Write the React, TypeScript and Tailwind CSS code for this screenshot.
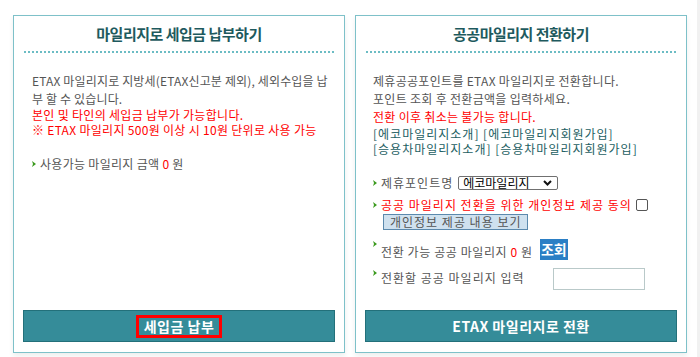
import React from "react";

const font = { fontFamily: '"Noto Sans CJK KR", "Noto Sans", sans-serif' };

function Bullet({ className = "" }: { className?: string }) {
  return (
    <svg width="4" height="6" viewBox="0 0 4 6" className={`shrink-0 ${className}`}>
      <polygon points="0,0 4,3 0,6 1,3" fill="#3b9a1e" />
    </svg>
  );
}

function Panel({ title, children, button, boxed }: { title: string; children: React.ReactNode; button: string; boxed?: boolean }) {
  return (
    <div className="w-[332px] h-[338px] border border-[#7ec1c9] bg-white flex flex-col px-[9px] pb-[10px] shadow-[0_3px_5px_rgba(0,0,0,0.07)]">
      <div className="h-[37px] mx-[1px] border-b-2 border-dotted border-[#6cbcc4] flex items-center justify-center pt-[1px]">
        <span className="text-[15px] font-semibold text-[#1e5a5e] tracking-[-0.5px]">{title}</span>
      </div>
      {children}
      <div className="mt-auto h-[32px] bg-[#358c99] border border-[#23707a] flex items-center justify-center">
        <span
          className={`text-[14px] font-bold text-white leading-[17px] tracking-[0.5px] ${boxed ? "border-[3px] border-[#ff0000] px-[5px] py-[0px]" : ""}`}
        >
          {button}
        </span>
      </div>
    </div>
  );
}

export default function App() {
  return (
    <div className="w-[700px] h-[357px] bg-white flex overflow-hidden" style={font}>
      <div className="flex-1 flex gap-[10px] pl-[13px] pt-[15px]">
        <Panel title="마일리지로 세입금 납부하기" button="세입금 납부" boxed>
          <div className="pl-[9px] pt-[19px] text-[12px] text-[#555] tracking-[0.15px]">
            <p className="leading-[18px]">ETAX 마일리지로 지방세(ETAX신고분 제외), 세외수입을 납부 할 수 있습니다.</p>
            <div className="tracking-[0.3px] text-[#ff0000]">
              <p className="leading-[15px] mt-[-1px]">본인 및 타인의 세입금 납부가 가능합니다.</p>
              <p className="leading-[15px]">※ ETAX 마일리지 500원 이상 시 10원 단위로 사용 가능</p>
            </div>
            <div className="flex items-center gap-[4px] mt-[19px] leading-[15px] tracking-[0.3px]">
              <Bullet />
              <span>
                사용가능 마일리지 금액 <span className="text-[#ff0000]">0</span> 원
              </span>
            </div>
          </div>
        </Panel>
        <Panel title="공공마일리지 전환하기" button="ETAX 마일리지로 전환">
          <div className="pl-[8px] pt-[19px] text-[12px] text-[#555]">
            <div className="tracking-[0.3px]">
              <p className="leading-[18px]">제휴공공포인트를 ETAX 마일리지로 전환합니다.</p>
              <p className="leading-[18px]">포인트 조회 후 전환금액을 입력하세요.</p>
              <p className="leading-[18px] text-[#ff0000]">전환 이후 취소는 불가능 합니다.</p>
            </div>
            <div className="tracking-[1px] text-[#1c5e62]">
              <p className="leading-[15px]">[에코마일리지소개] [에코마일리지회원가입]</p>
              <p className="leading-[15px]">[승용차마일리지소개] [승용차마일리지회원가입]</p>
            </div>

            <div className="tracking-[1px]">
              <div className="mt-[20px] flex items-center gap-[4px] h-[14px]">
                <Bullet />
                <span>제휴포인트명</span>
                <div className="ml-[1px] w-[100px] h-[14px] border border-[#707070] rounded-[2px] flex items-center justify-between pl-[4px] pr-[5px] text-[12px] text-black leading-none tracking-normal">
                  <span>에코마일리지</span>
                  <svg width="9" height="6" viewBox="0 0 9 6">
                    <path d="M1 1 L4.5 4.5 L8 1" stroke="#111" strokeWidth="2" fill="none" />
                  </svg>
                </div>
              </div>

              <div className="mt-[8px] flex items-center gap-[4px] h-[14px]">
                <Bullet />
                <span className="text-[#ff0000]">공공 마일리지 전환을 위한 개인정보 제공 동의</span>
                <span className="w-[12px] h-[12px] border border-[#555] rounded-[2px] bg-white" />
              </div>
              <div className="pl-[10px] mt-[1px]">
                <span className="inline-flex items-center h-[16px] px-[6px] bg-[#cfe1ef] border border-[#5b89ad] text-[12px] text-[#555] leading-none">
                  개인정보 제공 내용 보기
                </span>
              </div>

              <div className="mt-[8px] flex items-start gap-[4px]">
                <Bullet className="mt-[2px]" />
                <span className="mt-[6px] leading-[14px] tracking-[0.6px]">
                  전환 가능 공공 마일리지 <span className="text-[#ff0000]">0</span> 원
                </span>
                <span className="ml-[3px] h-[21px] w-[28px] bg-[#2b7fc5] text-white font-bold text-[14px] tracking-normal flex items-center justify-center">
                  조회
                </span>
              </div>

              <div className="mt-[8px] flex items-start gap-[4px]">
                <Bullet className="mt-[2px]" />
                <span className="mt-[3px] leading-[14px]">전환할 공공 마일리지 입력</span>
                <div className="ml-[24px] w-[92px] h-[22px] border border-[#b9c9c9] bg-white" />
              </div>
            </div>
          </div>
        </Panel>
      </div>
      <div className="w-[3px] bg-[#f1f1f1]" />
    </div>
  );
}
